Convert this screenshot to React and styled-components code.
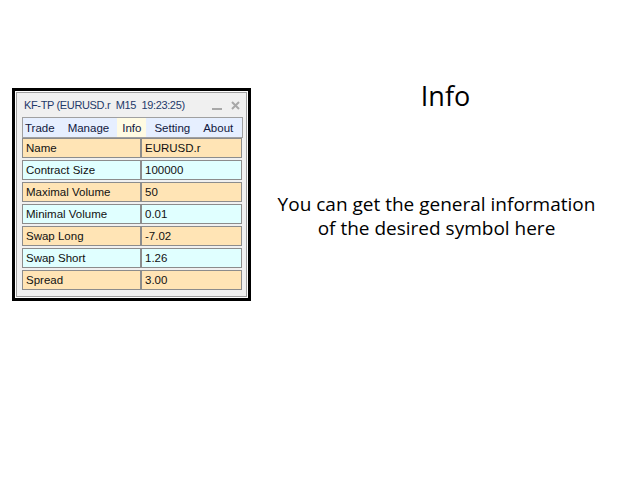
import React from "react";
import styled, { createGlobalStyle } from "styled-components";

const GlobalStyle = createGlobalStyle`
  html, body {
    margin: 0;
    padding: 0;
    background: #ffffff;
  }
  body {
    width: 640px;
    height: 480px;
    overflow: hidden;
  }
`;

const rows = [
  { name: "Name", value: "EURUSD.r", tone: "peach" },
  { name: "Contract Size", value: "100000", tone: "cyan" },
  { name: "Maximal Volume", value: "50", tone: "peach" },
  { name: "Minimal Volume", value: "0.01", tone: "cyan" },
  { name: "Swap Long", value: "-7.02", tone: "peach" },
  { name: "Swap Short", value: "1.26", tone: "cyan" },
  { name: "Spread", value: "3.00", tone: "peach" },
];

const tabs = ["Trade", "Manage", "Info", "Setting", "About"];

const App = () => {
  return (
    <>
      <GlobalStyle />
      <Page>
        <Frame>
          <Inner>
            <TitleBar>
              <TitleText>KF-TP (EURUSD.r&nbsp; M15&nbsp; 19:23:25)</TitleText>
              <WindowButtons>
                <MinimizeButton />
                <CloseButton>
                  <svg width="9" height="9" viewBox="0 0 9 9">
                    <path d="M1 1 L8 8 M8 1 L1 8" stroke="#a8a8a8" strokeWidth="2" />
                  </svg>
                </CloseButton>
              </WindowButtons>
            </TitleBar>
            <MenuBar>
              {tabs.map((tab) => (
                <Tab key={tab} $active={tab === "Info"}>
                  {tab}
                </Tab>
              ))}
            </MenuBar>
            <Table>
              {rows.map((row) => (
                <React.Fragment key={row.name}>
                  <Cell $tone={row.tone}>{row.name}</Cell>
                  <Cell $tone={row.tone}>{row.value}</Cell>
                </React.Fragment>
              ))}
            </Table>
          </Inner>
        </Frame>
        <InfoPane>
          <Heading>Info</Heading>
          <Description>
            You can get the general information
            <br />
            of the desired symbol here
          </Description>
        </InfoPane>
      </Page>
    </>
  );
};

export default App;

const Page = styled.div`
  display: flex;
  align-items: flex-start;
  width: 640px;
  height: 480px;
`;

const Frame = styled.div`
  margin: 88px 0 0 12px;
  width: 231px;
  border: 3px solid #000000;
  border-bottom-width: 3px;
  background: #ffffff;
  padding: 1px;
  flex-shrink: 0;
`;

const Inner = styled.div`
  background: #f0f0f0;
  border: 1px solid #a0a0a0;
  padding: 0 3px 4px 5px;
`;

const TitleBar = styled.div`
  display: flex;
  align-items: center;
  justify-content: space-between;
  height: 24px;
  padding-left: 2px;
`;

const TitleText = styled.span`
  font-family: "Liberation Sans", Arial, sans-serif;
  font-size: 11px;
  letter-spacing: -0.35px;
  color: #1f3a6a;
  white-space: nowrap;
`;

const WindowButtons = styled.div`
  display: flex;
  align-items: center;
  gap: 9px;
  padding-right: 3px;
`;

const MinimizeButton = styled.span`
  display: block;
  width: 10px;
  height: 2px;
  margin-top: 7px;
  background: #a8a8a8;
`;

const CloseButton = styled.span`
  display: flex;
  width: 9px;
  height: 9px;
`;

const MenuBar = styled.div`
  display: flex;
  gap: 1px;
  height: 19px;
  border: 1px solid #a0a0a0;
  background: #e6efff;
`;

const Tab = styled.span`
  display: flex;
  align-items: center;
  padding: 0 ${({ $active }) => ($active ? "5px" : "6px")};
  margin: 0 ${({ $active }) => ($active ? "1px" : "0")};
  font-family: "Liberation Sans", Arial, sans-serif;
  font-size: 11.5px;
  color: #101840;
  background: ${({ $active }) => ($active ? "#fffbe3" : "transparent")};
  &:first-child {
    padding-left: 2px;
  }
`;

const Table = styled.div`
  display: grid;
  grid-template-columns: 119px 101px;
`;

const Cell = styled.div`
  display: flex;
  align-items: center;
  padding-left: 3px;
  border: 1px solid #8c8c8c;
  margin-bottom: 2px;
  height: 18px;
  font-family: "Liberation Sans", Arial, sans-serif;
  font-size: 11.5px;
  color: #111111;
  background: ${({ $tone }) => ($tone === "peach" ? "#ffe4b5" : "#e0ffff")};
`;

const InfoPane = styled.div`
  flex: 1;
  display: flex;
  flex-direction: column;
  align-items: center;
  padding-top: 78px;
  font-family: "Open Sans", "Noto Sans", sans-serif;
  color: #000000;
`;

const Heading = styled.div`
  font-size: 27px;
  line-height: 36px;
`;

const Description = styled.div`
  margin-top: 78px;
  margin-right: 18px;
  font-size: 19px;
  line-height: 24px;
  text-align: center;
`;
